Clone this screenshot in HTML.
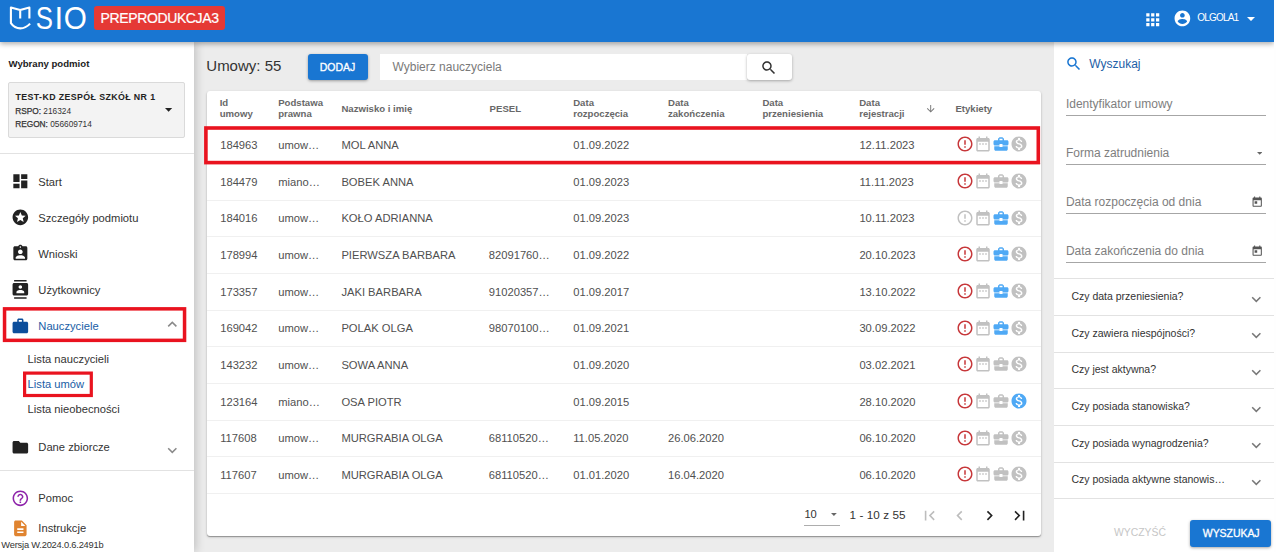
<!DOCTYPE html>
<html lang="pl">
<head>
<meta charset="utf-8">
<title>SIO - Lista umów</title>
<style>
*{box-sizing:border-box;margin:0;padding:0}
html,body{width:1276px;height:552px;overflow:hidden}
body{font-family:"Liberation Sans",sans-serif;background:#ececec;color:#333;position:relative;font-size:11.2px}
.abs{position:absolute}
.t{position:absolute;white-space:nowrap;line-height:1}
#hdr{position:absolute;left:0;top:0;width:1274px;height:42.4px;background:#1976d2;box-shadow:0 2px 5px rgba(0,0,0,.32);z-index:10}
#strip{position:absolute;left:1274px;top:0;width:2px;height:552px;background:#fefefe;z-index:11}
#badge{position:absolute;left:94.2px;top:6.2px;width:131px;height:23.8px;background:#e53935;border-radius:3px}
#side{position:absolute;left:0;top:42px;width:194px;height:510px;background:#fff;box-shadow:2px 0 9px rgba(0,0,0,.19);z-index:5}
#right{position:absolute;left:1053.8px;top:42px;width:220.4px;height:510px;background:#fff;z-index:4}
.mi{position:absolute;left:38.3px;font-size:11.2px;color:#333;white-space:nowrap;line-height:1}
.sub{position:absolute;left:27.6px;font-size:11.2px;color:#333;white-space:nowrap;line-height:1}
.hl{position:absolute;border:3.4px solid #e9131f;z-index:8}
#card{position:absolute;left:206.6px;top:91.3px;width:834.2px;height:444.8px;background:#fff;border-radius:3px;box-shadow:0 1px 1px rgba(0,0,0,.3),0 1px 3px rgba(0,0,0,.18);z-index:1}
.th{position:absolute;font-size:9.6px;font-weight:bold;color:#686868;line-height:11.4px;white-space:nowrap}
.sep{position:absolute;left:0;width:834.4px;height:1px;background:#f0f0f0}
.c{position:absolute;font-size:11.2px;line-height:1;color:#505050;white-space:nowrap}
.fl{position:absolute;left:12.1px;font-size:12px;color:#7e7e7e;white-space:nowrap;line-height:1}
.ul{position:absolute;left:12.1px;width:200.2px;height:1px;background:#a6a6a6}
.ex{position:absolute;left:0;width:220.4px;height:1px;background:#e2e2e2}
.et{position:absolute;left:17.6px;font-size:10.5px;color:#333;line-height:1;white-space:nowrap}
</style>
</head>
<body>
<div id="hdr">
<svg class="abs" style="left:0;top:0" width="96" height="42" viewBox="0 0 96 42"><path d="M29.4 18.6 L29.4 7.5 L20.2 10.1 L10.9 7.5 L10.9 23.2 C13 26.2 17 28.4 20.3 28.4 C23.6 28.4 27.3 26.6 30.1 23.6 M20.2 10.1 L20.2 18.6" fill="none" stroke="#fff" stroke-width="2.1" stroke-linejoin="round" stroke-linecap="butt"/><g font-family="Liberation Sans, sans-serif" font-size="31.9" fill="#fff"><text transform="translate(35.8 29.4) scale(.809 1)">S</text><text transform="translate(54.6 29.4) scale(.98 1)">I</text><text transform="translate(63.8 29.4) scale(.931 1)">O</text></g></svg>
<div id="badge"><span class="t" style="left:6.4px;top:4.95px;font-size:14px;color:#fff;letter-spacing:-0.38px;-webkit-text-stroke:0.2px #fff">PREPRODUKCJA3</span></div>
<svg class="abs" style="left:1142.55px;top:9.6px" width="19.5" height="19.5" viewBox="0 0 24 24"><path fill="#fff" d="M4 8h4V4H4v4zm6 12h4v-4h-4v4zm-6 0h4v-4H4v4zm0-6h4v-4H4v4zm6 0h4v-4h-4v4zm6-10v4h4V4h-4zm-6 4h4V4h-4v4zm6 6h4v-4h-4v4zm0 6h4v-4h-4v4z"/></svg>
<svg class="abs" style="left:1172.7px;top:9.2px" width="18.8" height="18.8" viewBox="0 0 24 24"><path fill="#fff" d="M12 2C6.480 2 2 6.480 2 12s4.480 10 10 10 10-4.480 10-10S17.520 2 12 2zm0 3c1.660 0 3 1.340 3 3s-1.340 3-3 3-3-1.340-3-3 1.340-3 3-3zm0 14.200c-2.500 0-4.710-1.280-6-3.220.030-1.990 4-3.080 6-3.080 1.990 0 5.970 1.090 6 3.080-1.290 1.940-3.500 3.220-6 3.220z"/></svg>
<span class="t" style="left:1197.2px;top:12.93px;font-size:10px;color:#fff;letter-spacing:-0.8px">OLGOLA1</span>
<svg class="abs" style="left:1247px;top:16.9px" width="8" height="4.1" viewBox="0 0 10 5"><path d="M0 0h10L5 5z" fill="#fff"/></svg>
</div><div id="strip"></div>
<div id="side">
<span class="t" style="left:8.5px;top:16.87px;font-size:9.6px;font-weight:bold;color:#222">Wybrany podmiot</span>
<div class="abs" style="left:8.2px;top:40px;width:176.4px;height:55.6px;background:#f3f3f3;border:1px solid #dadada;border-radius:2px">
<span class="t" style="left:6.300000000000001px;top:10.05px;font-size:8.8px;font-weight:bold;color:#222;letter-spacing:0.4px">TEST-KD ZESPÓŁ SZKÓŁ NR 1</span>
<span class="t" style="left:6.0px;top:23.77px;font-size:8.3px;color:#333"><span style="-webkit-text-stroke:0.25px #333">RSPO:</span> 216324</span>
<span class="t" style="left:6.0px;top:37.17px;font-size:8.3px;color:#333"><span style="-webkit-text-stroke:0.25px #333">REGON:</span> 056609714</span>
<svg class="abs" style="left:156.3px;top:25.200000000000003px" width="7.2" height="3.8" viewBox="0 0 10 5"><path d="M0 0h10L5 5z" fill="#222"/></svg>
</div>
<div class="abs" style="left:0;top:111px;width:194px;height:1px;background:#e2e2e2"></div>
<svg class="abs" style="left:10.7px;top:130.3px" width="18.7" height="18.7" viewBox="0 0 24 24"><path fill="#222" d="M3 13h8V3H3v10zm0 8h8v-6H3v6zm10 0h8V11h-8v10zm0-18v6h8V3h-8z"/></svg>
<span class="mi" style="top:134.82px;color:#333">Start</span>
<svg class="abs" style="left:10.7px;top:166.3px" width="18.7" height="18.7" viewBox="0 0 24 24"><path fill="#222" d="M11.99 2C6.47 2 2 6.48 2 12s4.47 10 9.99 10C17.52 22 22 17.52 22 12S17.52 2 11.99 2zm4.24 16L12 15.45 7.77 18l1.12-4.81-3.73-3.23 4.92-.42L12 5l1.92 4.53 4.920.420-3.730 3.230L16.230 18z"/></svg>
<span class="mi" style="top:170.82px;color:#333">Szczegóły podmiotu</span>
<svg class="abs" style="left:10.7px;top:202.3px" width="18.7" height="18.7" viewBox="0 0 24 24"><path fill="#222" d="M19 3h-4.180C14.4 1.84 13.3 1 12 1c-1.3 0-2.4.84-2.82 2H5c-1.1 0-2 .9-2 2v14c0 1.1.9 2 2 2h14c1.1 0 2-.9 2-2V5c0-1.1-.9-2-2-2zm-7 0c.55 0 1 .45 1 1s-.45 1-1 1-1-.45-1-1 .45-1 1-1zm0 4c1.660 0 3 1.340 3 3s-1.340 3-3 3-3-1.340-3-3 1.340-3 3-3zm6 12H6v-1.400c0-2 4-3.100 6-3.100s6 1.100 6 3.100V19z"/></svg>
<span class="mi" style="top:206.82px;color:#333">Wnioski</span>
<svg class="abs" style="left:10.7px;top:238.3px" width="18.7" height="18.7" viewBox="0 0 24 24"><path fill="#222" d="M20 0H4v2h16V0zM4 24h16v-2H4v2zM20 4H4c-1.100 0-2 .900-2 2v12c0 1.100.900 2 2 2h16c1.100 0 2-.900 2-2V6c0-1.100-.900-2-2-2zm-8 2.750c1.240 0 2.250 1.010 2.250 2.250s-1.010 2.250-2.250 2.250S9.750 10.240 9.750 9 10.760 6.750 12 6.750zM17 17H7v-1.500c0-1.670 3.330-2.500 5-2.500s5 .830 5 2.500V17z"/></svg>
<span class="mi" style="top:242.82px;color:#333">Użytkownicy</span>
<svg class="abs" style="left:10.7px;top:274.6px" width="18.7" height="18.7" viewBox="0 0 24 24"><path fill="#0c4e9b" d="M20 6h-4V4c0-1.110-.890-2-2-2h-4c-1.110 0-2 .890-2 2v2H4c-1.110 0-1.990.890-1.990 2L2 19c0 1.110.890 2 2 2h16c1.110 0 2-.890 2-2V8c0-1.110-.890-2-2-2zm-6 0h-4V4h4v2z"/></svg>
<span class="mi" style="top:279.12px;color:#185da6">Nauczyciele</span>
<svg class="abs" style="left:163.2px;top:273.0px" width="18.6" height="18.6" viewBox="0 0 24 24"><path fill="#8a8a8a" d="M12 8l-6 6 1.410 1.410L12 10.830l4.590 4.580L18 14z"/></svg>
<svg class="abs" style="left:1px;top:264px;z-index:8" width="187" height="39"><rect x="3.55" y="2.85" width="180.0" height="31.5" fill="none" stroke="#e9131f" stroke-width="3.5"/></svg>
<span class="sub" style="top:311.72px;color:#333">Lista nauczycieli</span>
<span class="sub" style="top:336.92px;color:#185da6">Lista umów</span>
<span class="sub" style="top:362.22px;color:#333">Lista nieobecności</span>
<svg class="abs" style="left:22px;top:328px;z-index:8" width="73" height="29"><rect x="2.6" y="3.1" width="66.7" height="22.4" fill="none" stroke="#e9131f" stroke-width="3.2"/></svg>
<svg class="abs" style="left:10.7px;top:396.15px" width="18.7" height="18.7" viewBox="0 0 24 24"><path fill="#222" d="M10 4H4c-1.100 0-1.990.900-1.990 2L2 18c0 1.100.900 2 2 2h16c1.100 0 2-.900 2-2V8c0-1.100-.900-2-2-2h-8l-2-2z"/></svg>
<span class="mi" style="top:399.92px">Dane zbiorcze</span>
<svg class="abs" style="left:162.8px;top:399.0px" width="18.6" height="18.6" viewBox="0 0 24 24"><path fill="#8a8a8a" d="M16.590 8.590L12 13.170 7.410 8.590 6 10l6 6 6-6z"/></svg>
<div class="abs" style="left:0;top:428.4px;width:194px;height:1px;background:#e2e2e2"></div>
<svg class="abs" style="left:10.9px;top:447.05px" width="18.7" height="18.7" viewBox="0 0 24 24"><path fill="#8e24aa" d="M11 18h2v-2h-2v2zm1-16C6.480 2 2 6.480 2 12s4.480 10 10 10 10-4.480 10-10S17.520 2 12 2zm0 18c-4.410 0-8-3.590-8-8s3.590-8 8-8 8 3.590 8 8-3.590 8-8 8zm0-14c-2.210 0-4 1.790-4 4h2c0-1.100.900-2 2-2s2 .900 2 2c0 2-3 1.750-3 5h2c0-2.250 3-2.500 3-5 0-2.210-1.790-4-4-4z"/></svg>
<span class="mi" style="top:450.92px">Pomoc</span>
<svg class="abs" style="left:10.7px;top:476.85px" width="18.7" height="18.7" viewBox="0 0 24 24"><path fill="#e08430" d="M14 2H6c-1.100 0-1.990.900-1.990 2L4 20c0 1.100.890 2 1.990 2H18c1.100 0 2-.900 2-2V8l-6-6zm2 16H8v-2h8v2zm0-4H8v-2h8v2zm-3-5V3.500L18.500 9H13z"/></svg>
<span class="mi" style="top:480.92px">Instrukcje</span>
<span class="t" style="left:1.3px;top:498.53px;font-size:9.3px;color:#333;letter-spacing:-0.2px">Wersja W.2024.0.6.2491b</span>
</div>
<span class="t" style="left:206.3px;top:57.5px;font-size:15px;color:#333;z-index:2">Umowy: 55</span>
<div class="abs" style="left:308.2px;top:53.7px;width:59.7px;height:26.8px;background:#1976d2;border-radius:3px;box-shadow:0 1px 3px rgba(0,0,0,.35)"><span class="t" style="left:11.6px;top:8.51px;font-size:10.5px;color:#fff;-webkit-text-stroke:0.3px #fff;letter-spacing:-0.05px">DODAJ</span></div>
<div class="abs" style="left:380.3px;top:53.8px;width:366.7px;height:26.5px;background:#fff;border-radius:0"><span class="t" style="left:12.2px;top:6.94px;font-size:12px;color:#7a7a7a">Wybierz nauczyciela</span></div>
<div class="abs" style="left:747px;top:53.8px;width:45px;height:26.5px;background:#fff;border-radius:3px;box-shadow:0 1px 3px rgba(0,0,0,.3)"><svg class="abs" style="left:13.4px;top:5.6px" width="17.6" height="17.6" viewBox="0 0 24 24"><path fill="#333" d="M15.500 14h-.790l-.280-.270C15.410 12.590 16 11.110 16 9.500 16 5.910 13.090 3 9.500 3S3 5.910 3 9.500 5.910 16 9.500 16c1.610 0 3.090-.590 4.230-1.570l.270.280v.790l5 4.990L20.490 19l-4.990-5zm-6 0C7.010 14 5 11.990 5 9.500S7.010 5 9.500 5 14 7.010 14 9.500 11.990 14 9.500 14z"/></svg></div>
<div id="card">
<span class="th" style="left:13.1px;top:5.57px">Id<br>umowy</span>
<span class="th" style="left:71.6px;top:5.57px">Podstawa<br>prawna</span>
<span class="th" style="left:134.8px;top:11.37px">Nazwisko i imię</span>
<span class="th" style="left:283.0px;top:11.37px">PESEL</span>
<span class="th" style="left:366.6px;top:5.57px">Data<br>rozpoczęcia</span>
<span class="th" style="left:461.4px;top:5.57px">Data<br>zakończenia</span>
<span class="th" style="left:555.8px;top:5.57px">Data<br>przeniesienia</span>
<span class="th" style="left:652.6px;top:5.57px">Data<br>rejestracji</span>
<span class="th" style="left:748.8px;top:11.37px">Etykiety</span>
<svg class="abs" style="left:718.9px;top:12.0px" width="11.4" height="11.4" viewBox="0 0 24 24"><path fill="#777" d="M20 12l-1.410-1.410L13 16.170V4h-2v12.170l-5.580-5.590L4 12l8 8 8-8z"/></svg>
<span class="c" style="left:13.6px;top:48.72px">184963</span>
<span class="c" style="left:71.6px;top:48.72px">umow…</span>
<span class="c" style="left:134.8px;top:48.72px">MOL ANNA</span>
<span class="c" style="left:366.6px;top:48.72px">01.09.2022</span>
<span class="c" style="left:652.8px;top:48.72px">12.11.2023</span>
<svg class="abs" style="left:749.0px;top:44.15px" width="18" height="18" viewBox="0 0 24 24"><path fill="#c7373a" d="M11 15h2v2h-2zm0-8h2v6h-2zm.990-5C6.470 2 2 6.480 2 12s4.470 10 9.990 10C17.520 22 22 17.520 22 12S17.520 2 11.990 2zM12 20c-4.420 0-8-3.580-8-8s3.580-8 8-8 8 3.580 8 8-3.580 8-8 8z"/></svg>
<svg class="abs" style="left:767.0px;top:44.15px" width="18" height="18" viewBox="0 0 24 24"><path fill="#c1c1c1" d="M9 11H7v2h2v-2zm4 0h-2v2h2v-2zm4 0h-2v2h2v-2zm2-7h-1V2h-2v2H8V2H6v2H5c-1.110 0-1.990.900-1.990 2L3 20c0 1.100.890 2 2 2h14c1.100 0 2-.900 2-2V6c0-1.100-.900-2-2-2zm0 16H5V9h14v11z"/></svg>
<svg class="abs" style="left:785.0px;top:44.15px" width="18" height="18" viewBox="0 0 24 24"><path fill="#4fa9f5" d="M10 16v-1H3.010L3 19c0 1.110.890 2 2 2h14c1.110 0 2-.890 2-2v-4h-7v1h-4zm10-9h-4.010V5l-2-2h-4l-2 2v2H4c-1.100 0-2 .900-2 2v3c0 1.110.890 2 2 2h6v-2h4v2h6c1.100 0 2-.900 2-2V9c0-1.100-.900-2-2-2zm-6 0h-4V5h4v2z"/></svg>
<svg class="abs" style="left:803.0px;top:44.15px" width="18" height="18" viewBox="0 0 24 24"><path fill="#c1c1c1" d="M12 2C6.480 2 2 6.480 2 12s4.480 10 10 10 10-4.480 10-10S17.520 2 12 2zm1.410 16.090V20h-2.670v-1.930c-1.710-.360-3.160-1.460-3.270-3.400h1.960c.100 1.050.820 1.870 2.650 1.870 1.960 0 2.400-.980 2.400-1.590 0-.830-.440-1.610-2.670-2.140-2.480-.600-4.180-1.620-4.180-3.670 0-1.720 1.390-2.840 3.110-3.210V4h2.670v1.950c1.860.450 2.790 1.860 2.850 3.390H14.300c-.050-1.110-.640-1.870-2.220-1.870-1.500 0-2.400.680-2.400 1.640 0 .840.650 1.390 2.670 1.910s4.180 1.390 4.180 3.910c-.010 1.830-1.380 2.830-3.120 3.160z"/></svg>
<div class="sep" style="top:71.85px"></div>
<span class="c" style="left:13.6px;top:85.37px">184479</span>
<span class="c" style="left:71.6px;top:85.37px">miano…</span>
<span class="c" style="left:134.8px;top:85.37px">BOBEK ANNA</span>
<span class="c" style="left:366.6px;top:85.37px">01.09.2023</span>
<span class="c" style="left:652.8px;top:85.37px">11.11.2023</span>
<svg class="abs" style="left:749.0px;top:80.8px" width="18" height="18" viewBox="0 0 24 24"><path fill="#c7373a" d="M11 15h2v2h-2zm0-8h2v6h-2zm.990-5C6.470 2 2 6.480 2 12s4.470 10 9.990 10C17.520 22 22 17.520 22 12S17.520 2 11.990 2zM12 20c-4.420 0-8-3.580-8-8s3.580-8 8-8 8 3.580 8 8-3.580 8-8 8z"/></svg>
<svg class="abs" style="left:767.0px;top:80.8px" width="18" height="18" viewBox="0 0 24 24"><path fill="#c1c1c1" d="M9 11H7v2h2v-2zm4 0h-2v2h2v-2zm4 0h-2v2h2v-2zm2-7h-1V2h-2v2H8V2H6v2H5c-1.110 0-1.990.900-1.990 2L3 20c0 1.100.890 2 2 2h14c1.100 0 2-.900 2-2V6c0-1.100-.900-2-2-2zm0 16H5V9h14v11z"/></svg>
<svg class="abs" style="left:785.0px;top:80.8px" width="18" height="18" viewBox="0 0 24 24"><path fill="#c1c1c1" d="M10 16v-1H3.010L3 19c0 1.110.890 2 2 2h14c1.110 0 2-.890 2-2v-4h-7v1h-4zm10-9h-4.010V5l-2-2h-4l-2 2v2H4c-1.100 0-2 .900-2 2v3c0 1.110.890 2 2 2h6v-2h4v2h6c1.100 0 2-.900 2-2V9c0-1.100-.900-2-2-2zm-6 0h-4V5h4v2z"/></svg>
<svg class="abs" style="left:803.0px;top:80.8px" width="18" height="18" viewBox="0 0 24 24"><path fill="#c1c1c1" d="M12 2C6.480 2 2 6.480 2 12s4.480 10 10 10 10-4.480 10-10S17.520 2 12 2zm1.410 16.090V20h-2.670v-1.930c-1.710-.360-3.160-1.460-3.270-3.400h1.960c.100 1.050.820 1.870 2.650 1.870 1.960 0 2.400-.980 2.400-1.590 0-.830-.440-1.610-2.670-2.140-2.480-.600-4.180-1.620-4.180-3.670 0-1.720 1.390-2.840 3.110-3.210V4h2.670v1.950c1.860.450 2.790 1.860 2.850 3.390H14.300c-.050-1.110-.640-1.870-2.220-1.870-1.500 0-2.400.680-2.400 1.640 0 .840.650 1.390 2.670 1.910s4.180 1.390 4.180 3.910c-.010 1.830-1.380 2.830-3.120 3.160z"/></svg>
<div class="sep" style="top:108.5px"></div>
<span class="c" style="left:13.6px;top:122.02px">184016</span>
<span class="c" style="left:71.6px;top:122.02px">umow…</span>
<span class="c" style="left:134.8px;top:122.02px">KOŁO ADRIANNA</span>
<span class="c" style="left:366.6px;top:122.02px">01.09.2023</span>
<span class="c" style="left:652.8px;top:122.02px">10.11.2023</span>
<svg class="abs" style="left:749.0px;top:117.45px" width="18" height="18" viewBox="0 0 24 24"><path fill="#c1c1c1" d="M11 15h2v2h-2zm0-8h2v6h-2zm.990-5C6.470 2 2 6.480 2 12s4.470 10 9.990 10C17.520 22 22 17.520 22 12S17.520 2 11.990 2zM12 20c-4.420 0-8-3.580-8-8s3.580-8 8-8 8 3.580 8 8-3.580 8-8 8z"/></svg>
<svg class="abs" style="left:767.0px;top:117.45px" width="18" height="18" viewBox="0 0 24 24"><path fill="#c1c1c1" d="M9 11H7v2h2v-2zm4 0h-2v2h2v-2zm4 0h-2v2h2v-2zm2-7h-1V2h-2v2H8V2H6v2H5c-1.110 0-1.990.900-1.990 2L3 20c0 1.100.890 2 2 2h14c1.100 0 2-.900 2-2V6c0-1.100-.900-2-2-2zm0 16H5V9h14v11z"/></svg>
<svg class="abs" style="left:785.0px;top:117.45px" width="18" height="18" viewBox="0 0 24 24"><path fill="#4fa9f5" d="M10 16v-1H3.010L3 19c0 1.110.890 2 2 2h14c1.110 0 2-.890 2-2v-4h-7v1h-4zm10-9h-4.010V5l-2-2h-4l-2 2v2H4c-1.100 0-2 .900-2 2v3c0 1.110.890 2 2 2h6v-2h4v2h6c1.100 0 2-.900 2-2V9c0-1.100-.900-2-2-2zm-6 0h-4V5h4v2z"/></svg>
<svg class="abs" style="left:803.0px;top:117.45px" width="18" height="18" viewBox="0 0 24 24"><path fill="#c1c1c1" d="M12 2C6.480 2 2 6.480 2 12s4.480 10 10 10 10-4.480 10-10S17.520 2 12 2zm1.410 16.090V20h-2.670v-1.930c-1.710-.360-3.160-1.460-3.270-3.400h1.960c.100 1.050.820 1.870 2.650 1.870 1.960 0 2.400-.980 2.400-1.590 0-.830-.440-1.610-2.670-2.140-2.480-.600-4.180-1.620-4.180-3.670 0-1.720 1.390-2.840 3.110-3.210V4h2.670v1.950c1.860.450 2.790 1.860 2.850 3.390H14.300c-.050-1.110-.640-1.870-2.220-1.870-1.500 0-2.400.680-2.400 1.640 0 .840.650 1.390 2.670 1.910s4.180 1.390 4.180 3.910c-.010 1.830-1.380 2.830-3.120 3.160z"/></svg>
<div class="sep" style="top:145.15px"></div>
<span class="c" style="left:13.6px;top:158.67px">178994</span>
<span class="c" style="left:71.6px;top:158.67px">umow…</span>
<span class="c" style="left:134.8px;top:158.67px">PIERWSZA BARBARA</span>
<span class="c" style="left:282.2px;top:158.67px">82091760…</span>
<span class="c" style="left:366.6px;top:158.67px">01.09.2022</span>
<span class="c" style="left:652.8px;top:158.67px">20.10.2023</span>
<svg class="abs" style="left:749.0px;top:154.1px" width="18" height="18" viewBox="0 0 24 24"><path fill="#c7373a" d="M11 15h2v2h-2zm0-8h2v6h-2zm.990-5C6.470 2 2 6.480 2 12s4.470 10 9.990 10C17.520 22 22 17.520 22 12S17.520 2 11.990 2zM12 20c-4.420 0-8-3.580-8-8s3.580-8 8-8 8 3.580 8 8-3.580 8-8 8z"/></svg>
<svg class="abs" style="left:767.0px;top:154.1px" width="18" height="18" viewBox="0 0 24 24"><path fill="#c1c1c1" d="M9 11H7v2h2v-2zm4 0h-2v2h2v-2zm4 0h-2v2h2v-2zm2-7h-1V2h-2v2H8V2H6v2H5c-1.110 0-1.990.900-1.990 2L3 20c0 1.100.890 2 2 2h14c1.100 0 2-.900 2-2V6c0-1.100-.900-2-2-2zm0 16H5V9h14v11z"/></svg>
<svg class="abs" style="left:785.0px;top:154.1px" width="18" height="18" viewBox="0 0 24 24"><path fill="#4fa9f5" d="M10 16v-1H3.010L3 19c0 1.110.890 2 2 2h14c1.110 0 2-.890 2-2v-4h-7v1h-4zm10-9h-4.010V5l-2-2h-4l-2 2v2H4c-1.100 0-2 .900-2 2v3c0 1.110.890 2 2 2h6v-2h4v2h6c1.100 0 2-.900 2-2V9c0-1.100-.900-2-2-2zm-6 0h-4V5h4v2z"/></svg>
<svg class="abs" style="left:803.0px;top:154.1px" width="18" height="18" viewBox="0 0 24 24"><path fill="#c1c1c1" d="M12 2C6.480 2 2 6.480 2 12s4.480 10 10 10 10-4.480 10-10S17.520 2 12 2zm1.410 16.090V20h-2.670v-1.930c-1.710-.360-3.160-1.460-3.270-3.400h1.960c.100 1.050.820 1.870 2.650 1.870 1.960 0 2.400-.980 2.400-1.590 0-.830-.440-1.610-2.670-2.140-2.480-.600-4.180-1.620-4.180-3.670 0-1.720 1.390-2.840 3.110-3.210V4h2.670v1.950c1.860.450 2.790 1.860 2.850 3.390H14.300c-.050-1.110-.640-1.870-2.220-1.870-1.500 0-2.400.680-2.400 1.640 0 .840.650 1.390 2.670 1.910s4.180 1.390 4.180 3.910c-.010 1.830-1.380 2.830-3.120 3.160z"/></svg>
<div class="sep" style="top:181.8px"></div>
<span class="c" style="left:13.6px;top:195.32px">173357</span>
<span class="c" style="left:71.6px;top:195.32px">umow…</span>
<span class="c" style="left:134.8px;top:195.32px">JAKI BARBARA</span>
<span class="c" style="left:282.2px;top:195.32px">91020357…</span>
<span class="c" style="left:366.6px;top:195.32px">01.09.2017</span>
<span class="c" style="left:652.8px;top:195.32px">13.10.2022</span>
<svg class="abs" style="left:749.0px;top:190.75px" width="18" height="18" viewBox="0 0 24 24"><path fill="#c7373a" d="M11 15h2v2h-2zm0-8h2v6h-2zm.990-5C6.470 2 2 6.480 2 12s4.470 10 9.990 10C17.520 22 22 17.520 22 12S17.520 2 11.990 2zM12 20c-4.420 0-8-3.580-8-8s3.580-8 8-8 8 3.580 8 8-3.580 8-8 8z"/></svg>
<svg class="abs" style="left:767.0px;top:190.75px" width="18" height="18" viewBox="0 0 24 24"><path fill="#c1c1c1" d="M9 11H7v2h2v-2zm4 0h-2v2h2v-2zm4 0h-2v2h2v-2zm2-7h-1V2h-2v2H8V2H6v2H5c-1.110 0-1.990.900-1.990 2L3 20c0 1.100.890 2 2 2h14c1.100 0 2-.900 2-2V6c0-1.100-.900-2-2-2zm0 16H5V9h14v11z"/></svg>
<svg class="abs" style="left:785.0px;top:190.75px" width="18" height="18" viewBox="0 0 24 24"><path fill="#4fa9f5" d="M10 16v-1H3.010L3 19c0 1.110.890 2 2 2h14c1.110 0 2-.890 2-2v-4h-7v1h-4zm10-9h-4.010V5l-2-2h-4l-2 2v2H4c-1.100 0-2 .900-2 2v3c0 1.110.890 2 2 2h6v-2h4v2h6c1.100 0 2-.900 2-2V9c0-1.100-.900-2-2-2zm-6 0h-4V5h4v2z"/></svg>
<svg class="abs" style="left:803.0px;top:190.75px" width="18" height="18" viewBox="0 0 24 24"><path fill="#c1c1c1" d="M12 2C6.480 2 2 6.480 2 12s4.480 10 10 10 10-4.480 10-10S17.520 2 12 2zm1.410 16.090V20h-2.670v-1.930c-1.710-.360-3.160-1.460-3.270-3.400h1.960c.100 1.050.820 1.870 2.650 1.870 1.960 0 2.400-.980 2.400-1.590 0-.830-.440-1.610-2.670-2.140-2.480-.600-4.180-1.620-4.180-3.670 0-1.720 1.390-2.840 3.110-3.210V4h2.670v1.950c1.860.450 2.790 1.860 2.850 3.390H14.300c-.050-1.110-.640-1.870-2.220-1.870-1.500 0-2.400.680-2.400 1.640 0 .840.650 1.390 2.670 1.910s4.180 1.390 4.180 3.910c-.010 1.830-1.380 2.830-3.120 3.160z"/></svg>
<div class="sep" style="top:218.45px"></div>
<span class="c" style="left:13.6px;top:231.97px">169042</span>
<span class="c" style="left:71.6px;top:231.97px">umow…</span>
<span class="c" style="left:134.8px;top:231.97px">POLAK OLGA</span>
<span class="c" style="left:282.2px;top:231.97px">98070100…</span>
<span class="c" style="left:366.6px;top:231.97px">01.09.2021</span>
<span class="c" style="left:652.8px;top:231.97px">30.09.2022</span>
<svg class="abs" style="left:749.0px;top:227.4px" width="18" height="18" viewBox="0 0 24 24"><path fill="#c7373a" d="M11 15h2v2h-2zm0-8h2v6h-2zm.990-5C6.470 2 2 6.480 2 12s4.470 10 9.990 10C17.520 22 22 17.520 22 12S17.520 2 11.990 2zM12 20c-4.420 0-8-3.580-8-8s3.580-8 8-8 8 3.580 8 8-3.580 8-8 8z"/></svg>
<svg class="abs" style="left:767.0px;top:227.4px" width="18" height="18" viewBox="0 0 24 24"><path fill="#c1c1c1" d="M9 11H7v2h2v-2zm4 0h-2v2h2v-2zm4 0h-2v2h2v-2zm2-7h-1V2h-2v2H8V2H6v2H5c-1.110 0-1.990.900-1.990 2L3 20c0 1.100.890 2 2 2h14c1.100 0 2-.900 2-2V6c0-1.100-.900-2-2-2zm0 16H5V9h14v11z"/></svg>
<svg class="abs" style="left:785.0px;top:227.4px" width="18" height="18" viewBox="0 0 24 24"><path fill="#4fa9f5" d="M10 16v-1H3.010L3 19c0 1.110.890 2 2 2h14c1.110 0 2-.890 2-2v-4h-7v1h-4zm10-9h-4.010V5l-2-2h-4l-2 2v2H4c-1.100 0-2 .900-2 2v3c0 1.110.890 2 2 2h6v-2h4v2h6c1.100 0 2-.900 2-2V9c0-1.100-.900-2-2-2zm-6 0h-4V5h4v2z"/></svg>
<svg class="abs" style="left:803.0px;top:227.4px" width="18" height="18" viewBox="0 0 24 24"><path fill="#c1c1c1" d="M12 2C6.480 2 2 6.480 2 12s4.480 10 10 10 10-4.480 10-10S17.520 2 12 2zm1.410 16.090V20h-2.670v-1.930c-1.710-.360-3.160-1.460-3.270-3.400h1.960c.100 1.050.820 1.870 2.650 1.870 1.960 0 2.400-.980 2.400-1.590 0-.830-.440-1.610-2.670-2.140-2.480-.600-4.180-1.620-4.180-3.670 0-1.720 1.390-2.840 3.110-3.210V4h2.670v1.950c1.860.450 2.790 1.860 2.850 3.390H14.300c-.050-1.110-.640-1.870-2.220-1.870-1.500 0-2.400.680-2.400 1.640 0 .840.650 1.390 2.670 1.910s4.180 1.390 4.180 3.910c-.010 1.830-1.380 2.830-3.120 3.160z"/></svg>
<div class="sep" style="top:255.1px"></div>
<span class="c" style="left:13.6px;top:268.62px">143232</span>
<span class="c" style="left:71.6px;top:268.62px">umow…</span>
<span class="c" style="left:134.8px;top:268.62px">SOWA ANNA</span>
<span class="c" style="left:366.6px;top:268.62px">01.09.2020</span>
<span class="c" style="left:652.8px;top:268.62px">03.02.2021</span>
<svg class="abs" style="left:749.0px;top:264.05px" width="18" height="18" viewBox="0 0 24 24"><path fill="#c7373a" d="M11 15h2v2h-2zm0-8h2v6h-2zm.990-5C6.470 2 2 6.480 2 12s4.470 10 9.990 10C17.520 22 22 17.520 22 12S17.520 2 11.990 2zM12 20c-4.420 0-8-3.580-8-8s3.580-8 8-8 8 3.580 8 8-3.580 8-8 8z"/></svg>
<svg class="abs" style="left:767.0px;top:264.05px" width="18" height="18" viewBox="0 0 24 24"><path fill="#c1c1c1" d="M9 11H7v2h2v-2zm4 0h-2v2h2v-2zm4 0h-2v2h2v-2zm2-7h-1V2h-2v2H8V2H6v2H5c-1.110 0-1.990.900-1.990 2L3 20c0 1.100.890 2 2 2h14c1.100 0 2-.900 2-2V6c0-1.100-.900-2-2-2zm0 16H5V9h14v11z"/></svg>
<svg class="abs" style="left:785.0px;top:264.05px" width="18" height="18" viewBox="0 0 24 24"><path fill="#c1c1c1" d="M10 16v-1H3.010L3 19c0 1.110.890 2 2 2h14c1.110 0 2-.890 2-2v-4h-7v1h-4zm10-9h-4.010V5l-2-2h-4l-2 2v2H4c-1.100 0-2 .900-2 2v3c0 1.110.890 2 2 2h6v-2h4v2h6c1.100 0 2-.900 2-2V9c0-1.100-.900-2-2-2zm-6 0h-4V5h4v2z"/></svg>
<svg class="abs" style="left:803.0px;top:264.05px" width="18" height="18" viewBox="0 0 24 24"><path fill="#c1c1c1" d="M12 2C6.480 2 2 6.480 2 12s4.480 10 10 10 10-4.480 10-10S17.520 2 12 2zm1.410 16.090V20h-2.670v-1.930c-1.710-.360-3.160-1.460-3.270-3.400h1.960c.100 1.050.820 1.870 2.650 1.870 1.960 0 2.400-.980 2.400-1.590 0-.830-.440-1.610-2.670-2.140-2.480-.600-4.180-1.620-4.180-3.670 0-1.720 1.390-2.840 3.110-3.210V4h2.670v1.950c1.860.450 2.790 1.860 2.850 3.390H14.300c-.050-1.110-.640-1.870-2.220-1.870-1.500 0-2.400.680-2.400 1.640 0 .840.650 1.390 2.670 1.910s4.180 1.390 4.180 3.910c-.010 1.830-1.380 2.830-3.120 3.160z"/></svg>
<div class="sep" style="top:291.75px"></div>
<span class="c" style="left:13.6px;top:305.27px">123164</span>
<span class="c" style="left:71.6px;top:305.27px">miano…</span>
<span class="c" style="left:134.8px;top:305.27px">OSA PIOTR</span>
<span class="c" style="left:366.6px;top:305.27px">01.09.2015</span>
<span class="c" style="left:652.8px;top:305.27px">28.10.2020</span>
<svg class="abs" style="left:749.0px;top:300.7px" width="18" height="18" viewBox="0 0 24 24"><path fill="#c7373a" d="M11 15h2v2h-2zm0-8h2v6h-2zm.990-5C6.470 2 2 6.480 2 12s4.470 10 9.990 10C17.520 22 22 17.520 22 12S17.520 2 11.990 2zM12 20c-4.420 0-8-3.580-8-8s3.580-8 8-8 8 3.580 8 8-3.580 8-8 8z"/></svg>
<svg class="abs" style="left:767.0px;top:300.7px" width="18" height="18" viewBox="0 0 24 24"><path fill="#c1c1c1" d="M9 11H7v2h2v-2zm4 0h-2v2h2v-2zm4 0h-2v2h2v-2zm2-7h-1V2h-2v2H8V2H6v2H5c-1.110 0-1.990.900-1.990 2L3 20c0 1.100.890 2 2 2h14c1.100 0 2-.900 2-2V6c0-1.100-.900-2-2-2zm0 16H5V9h14v11z"/></svg>
<svg class="abs" style="left:785.0px;top:300.7px" width="18" height="18" viewBox="0 0 24 24"><path fill="#c1c1c1" d="M10 16v-1H3.010L3 19c0 1.110.890 2 2 2h14c1.110 0 2-.890 2-2v-4h-7v1h-4zm10-9h-4.010V5l-2-2h-4l-2 2v2H4c-1.100 0-2 .900-2 2v3c0 1.110.890 2 2 2h6v-2h4v2h6c1.100 0 2-.900 2-2V9c0-1.100-.900-2-2-2zm-6 0h-4V5h4v2z"/></svg>
<svg class="abs" style="left:803.0px;top:300.7px" width="18" height="18" viewBox="0 0 24 24"><path fill="#4fa9f5" d="M12 2C6.480 2 2 6.480 2 12s4.480 10 10 10 10-4.480 10-10S17.520 2 12 2zm1.410 16.090V20h-2.670v-1.930c-1.710-.360-3.160-1.460-3.270-3.400h1.960c.100 1.050.820 1.870 2.650 1.870 1.960 0 2.400-.980 2.400-1.590 0-.830-.440-1.610-2.670-2.140-2.480-.600-4.180-1.620-4.180-3.670 0-1.720 1.390-2.840 3.110-3.210V4h2.670v1.950c1.860.450 2.790 1.860 2.850 3.390H14.300c-.050-1.110-.640-1.870-2.220-1.870-1.500 0-2.400.680-2.400 1.640 0 .840.650 1.390 2.670 1.910s4.180 1.390 4.180 3.910c-.010 1.830-1.380 2.830-3.120 3.160z"/></svg>
<div class="sep" style="top:328.4px"></div>
<span class="c" style="left:13.6px;top:341.92px">117608</span>
<span class="c" style="left:71.6px;top:341.92px">umow…</span>
<span class="c" style="left:134.8px;top:341.92px">MURGRABIA OLGA</span>
<span class="c" style="left:282.2px;top:341.92px">68110520…</span>
<span class="c" style="left:366.6px;top:341.92px">11.05.2020</span>
<span class="c" style="left:461.4px;top:341.92px">26.06.2020</span>
<span class="c" style="left:652.8px;top:341.92px">06.10.2020</span>
<svg class="abs" style="left:749.0px;top:337.35px" width="18" height="18" viewBox="0 0 24 24"><path fill="#c7373a" d="M11 15h2v2h-2zm0-8h2v6h-2zm.990-5C6.470 2 2 6.480 2 12s4.470 10 9.990 10C17.520 22 22 17.520 22 12S17.520 2 11.990 2zM12 20c-4.420 0-8-3.580-8-8s3.580-8 8-8 8 3.580 8 8-3.580 8-8 8z"/></svg>
<svg class="abs" style="left:767.0px;top:337.35px" width="18" height="18" viewBox="0 0 24 24"><path fill="#c1c1c1" d="M9 11H7v2h2v-2zm4 0h-2v2h2v-2zm4 0h-2v2h2v-2zm2-7h-1V2h-2v2H8V2H6v2H5c-1.110 0-1.990.900-1.990 2L3 20c0 1.100.890 2 2 2h14c1.100 0 2-.900 2-2V6c0-1.100-.900-2-2-2zm0 16H5V9h14v11z"/></svg>
<svg class="abs" style="left:785.0px;top:337.35px" width="18" height="18" viewBox="0 0 24 24"><path fill="#c1c1c1" d="M10 16v-1H3.010L3 19c0 1.110.890 2 2 2h14c1.110 0 2-.890 2-2v-4h-7v1h-4zm10-9h-4.010V5l-2-2h-4l-2 2v2H4c-1.100 0-2 .900-2 2v3c0 1.110.890 2 2 2h6v-2h4v2h6c1.100 0 2-.900 2-2V9c0-1.100-.900-2-2-2zm-6 0h-4V5h4v2z"/></svg>
<svg class="abs" style="left:803.0px;top:337.35px" width="18" height="18" viewBox="0 0 24 24"><path fill="#c1c1c1" d="M12 2C6.480 2 2 6.480 2 12s4.480 10 10 10 10-4.480 10-10S17.520 2 12 2zm1.410 16.090V20h-2.670v-1.930c-1.710-.360-3.160-1.460-3.270-3.400h1.960c.100 1.050.820 1.870 2.650 1.870 1.960 0 2.400-.980 2.400-1.590 0-.830-.440-1.610-2.670-2.140-2.480-.600-4.180-1.620-4.180-3.670 0-1.720 1.390-2.840 3.110-3.210V4h2.670v1.950c1.860.450 2.790 1.860 2.850 3.390H14.300c-.050-1.110-.640-1.870-2.220-1.870-1.500 0-2.400.680-2.400 1.640 0 .840.650 1.390 2.670 1.910s4.180 1.390 4.180 3.910c-.010 1.830-1.380 2.830-3.120 3.160z"/></svg>
<div class="sep" style="top:365.05px"></div>
<span class="c" style="left:13.6px;top:378.57px">117607</span>
<span class="c" style="left:71.6px;top:378.57px">umow…</span>
<span class="c" style="left:134.8px;top:378.57px">MURGRABIA OLGA</span>
<span class="c" style="left:282.2px;top:378.57px">68110520…</span>
<span class="c" style="left:366.6px;top:378.57px">01.01.2020</span>
<span class="c" style="left:461.4px;top:378.57px">16.04.2020</span>
<span class="c" style="left:652.8px;top:378.57px">06.10.2020</span>
<svg class="abs" style="left:749.0px;top:374.0px" width="18" height="18" viewBox="0 0 24 24"><path fill="#c7373a" d="M11 15h2v2h-2zm0-8h2v6h-2zm.990-5C6.470 2 2 6.480 2 12s4.470 10 9.990 10C17.520 22 22 17.520 22 12S17.520 2 11.990 2zM12 20c-4.420 0-8-3.580-8-8s3.580-8 8-8 8 3.580 8 8-3.580 8-8 8z"/></svg>
<svg class="abs" style="left:767.0px;top:374.0px" width="18" height="18" viewBox="0 0 24 24"><path fill="#c1c1c1" d="M9 11H7v2h2v-2zm4 0h-2v2h2v-2zm4 0h-2v2h2v-2zm2-7h-1V2h-2v2H8V2H6v2H5c-1.110 0-1.990.900-1.990 2L3 20c0 1.100.890 2 2 2h14c1.100 0 2-.900 2-2V6c0-1.100-.900-2-2-2zm0 16H5V9h14v11z"/></svg>
<svg class="abs" style="left:785.0px;top:374.0px" width="18" height="18" viewBox="0 0 24 24"><path fill="#c1c1c1" d="M10 16v-1H3.010L3 19c0 1.110.890 2 2 2h14c1.110 0 2-.890 2-2v-4h-7v1h-4zm10-9h-4.010V5l-2-2h-4l-2 2v2H4c-1.100 0-2 .900-2 2v3c0 1.110.890 2 2 2h6v-2h4v2h6c1.100 0 2-.900 2-2V9c0-1.100-.900-2-2-2zm-6 0h-4V5h4v2z"/></svg>
<svg class="abs" style="left:803.0px;top:374.0px" width="18" height="18" viewBox="0 0 24 24"><path fill="#c1c1c1" d="M12 2C6.480 2 2 6.480 2 12s4.480 10 10 10 10-4.480 10-10S17.520 2 12 2zm1.410 16.090V20h-2.670v-1.930c-1.710-.360-3.160-1.460-3.270-3.400h1.960c.100 1.050.820 1.870 2.650 1.870 1.960 0 2.400-.980 2.400-1.590 0-.830-.440-1.610-2.670-2.140-2.480-.600-4.180-1.620-4.180-3.670 0-1.720 1.390-2.840 3.110-3.210V4h2.670v1.950c1.860.450 2.790 1.860 2.850 3.390H14.300c-.050-1.110-.640-1.870-2.220-1.870-1.500 0-2.400.680-2.400 1.640 0 .840.650 1.390 2.670 1.910s4.180 1.390 4.180 3.910c-.010 1.830-1.380 2.830-3.120 3.160z"/></svg>
<div class="sep" style="top:401.7px"></div>
<span class="c" style="left:597.8px;top:417.82px;color:#333">10</span>
<div class="abs" style="left:597.1px;top:433.7px;width:36px;height:1px;background:#adadad"></div>
<svg class="abs" style="left:624.3px;top:421.9px" width="5.8" height="2.9" viewBox="0 0 10 5"><path d="M0 0h10L5 5z" fill="#666"/></svg>
<span class="c" style="left:642.8px;top:417.4px;font-size:11.7px;word-spacing:0.25px;color:#333">1 - 10 z 55</span>
<svg class="abs" style="left:713.4px;top:415.0px" width="19.2" height="19.2" viewBox="0 0 24 24"><path fill="#bdbdbd" d="M18.410 16.590L13.820 12l4.590-4.590L17 6l-6 6 6 6zM6 6h2v12H6z"/></svg>
<svg class="abs" style="left:743.6px;top:415.0px" width="19.2" height="19.2" viewBox="0 0 24 24"><path fill="#bdbdbd" d="M15.410 7.410L14 6l-6 6 6 6 1.410-1.410L10.830 12z"/></svg>
<svg class="abs" style="left:773.4px;top:415.0px" width="19.2" height="19.2" viewBox="0 0 24 24"><path fill="#222" d="M10 6L8.590 7.410 13.170 12l-4.580 4.590L10 18l6-6z"/></svg>
<svg class="abs" style="left:803.7px;top:415.0px" width="19.2" height="19.2" viewBox="0 0 24 24"><path fill="#222" d="M5.590 7.410L10.180 12l-4.590 4.590L7 18l6-6-6-6zM16 6h2v12h-2z"/></svg>
</div>
<svg class="abs" style="left:203px;top:125px;z-index:8" width="839" height="42"><rect x="2.9" y="3.0" width="832.4" height="34.6" fill="none" stroke="#e9131f" stroke-width="3.6"/></svg>
<div id="right">
<svg class="abs" style="left:11.1px;top:12.9px" width="17.6" height="17.6" viewBox="0 0 24 24"><path fill="#1976d2" d="M15.500 14h-.790l-.280-.270C15.410 12.590 16 11.110 16 9.500 16 5.910 13.090 3 9.500 3S3 5.910 3 9.500 5.910 16 9.500 16c1.610 0 3.090-.590 4.230-1.570l.270.280v.790l5 4.990L20.490 19l-4.990-5zm-6 0C7.010 14 5 11.990 5 9.500S7.010 5 9.500 5 14 7.010 14 9.500 11.990 14 9.500 14z"/></svg>
<span class="t" style="left:35.5px;top:15.84px;font-size:12px;color:#1d5ea6">Wyszukaj</span>
<span class="fl" style="top:55.54px">Identyfikator umowy</span>
<div class="ul" style="top:73.2px"></div>
<span class="fl" style="top:104.64px">Forma zatrudnienia</span>
<div class="ul" style="top:122.2px"></div>
<svg class="abs" style="left:203.0px;top:109.7px" width="5.4" height="2.9" viewBox="0 0 10 5"><path d="M0 0h10L5 5z" fill="#666"/></svg>
<span class="fl" style="top:153.64px">Data rozpoczęcia od dnia</span>
<div class="ul" style="top:171.4px"></div>
<svg class="abs" style="left:196.8px;top:154.2px" width="12.4" height="12.4" viewBox="0 0 24 24"><path fill="#555" d="M19 3h-1V1h-2v2H8V1H6v2H5c-1.110 0-1.990.900-1.990 2L3 19c0 1.100.890 2 2 2h14c1.100 0 2-.900 2-2V5c0-1.100-.900-2-2-2zm0 16H5V8h14v11zM7 10h5v5H7z"/></svg>
<span class="fl" style="top:202.84px">Data zakończenia do dnia</span>
<div class="ul" style="top:220.4px"></div>
<svg class="abs" style="left:196.8px;top:203.4px" width="12.4" height="12.4" viewBox="0 0 24 24"><path fill="#555" d="M19 3h-1V1h-2v2H8V1H6v2H5c-1.110 0-1.990.900-1.990 2L3 19c0 1.100.890 2 2 2h14c1.100 0 2-.900 2-2V5c0-1.100-.900-2-2-2zm0 16H5V8h14v11zM7 10h5v5H7z"/></svg>
<div class="ex" style="top:236.3px"></div>
<span class="et" style="top:249.01px">Czy data przeniesienia?</span>
<svg class="abs" style="left:193.6px;top:247.6px" width="18.6" height="18.6" viewBox="0 0 24 24"><path fill="#787878" d="M16.590 8.590L12 13.170 7.410 8.590 6 10l6 6 6-6z"/></svg>
<div class="ex" style="top:272.96px"></div>
<span class="et" style="top:285.67px">Czy zawiera niespójności?</span>
<svg class="abs" style="left:193.6px;top:284.26px" width="18.6" height="18.6" viewBox="0 0 24 24"><path fill="#787878" d="M16.590 8.590L12 13.170 7.410 8.590 6 10l6 6 6-6z"/></svg>
<div class="ex" style="top:309.62px"></div>
<span class="et" style="top:322.33px">Czy jest aktywna?</span>
<svg class="abs" style="left:193.6px;top:320.92px" width="18.6" height="18.6" viewBox="0 0 24 24"><path fill="#787878" d="M16.590 8.590L12 13.170 7.410 8.590 6 10l6 6 6-6z"/></svg>
<div class="ex" style="top:346.28px"></div>
<span class="et" style="top:358.99px">Czy posiada stanowiska?</span>
<svg class="abs" style="left:193.6px;top:357.58px" width="18.6" height="18.6" viewBox="0 0 24 24"><path fill="#787878" d="M16.590 8.590L12 13.170 7.410 8.590 6 10l6 6 6-6z"/></svg>
<div class="ex" style="top:382.94px"></div>
<span class="et" style="top:395.65px">Czy posiada wynagrodzenia?</span>
<svg class="abs" style="left:193.6px;top:394.24px" width="18.6" height="18.6" viewBox="0 0 24 24"><path fill="#787878" d="M16.590 8.590L12 13.170 7.410 8.590 6 10l6 6 6-6z"/></svg>
<div class="ex" style="top:419.6px"></div>
<span class="et" style="top:432.31px">Czy posiada aktywne stanowis…</span>
<svg class="abs" style="left:193.6px;top:430.9px" width="18.6" height="18.6" viewBox="0 0 24 24"><path fill="#787878" d="M16.590 8.590L12 13.170 7.410 8.590 6 10l6 6 6-6z"/></svg>
<div class="ex" style="top:456.26px"></div>
<span class="t" style="left:60.2px;top:485.8px;font-size:10.4px;color:#c6c6c6">WYCZYŚĆ</span>
<div class="abs" style="left:136.6px;top:477.5px;width:81px;height:27px;background:#1976d2;border-radius:3px;box-shadow:0 1px 3px rgba(0,0,0,.35)"><span class="t" style="left:12.4px;top:8.4px;font-size:10.5px;color:#fff;-webkit-text-stroke:0.3px #fff;letter-spacing:-0.05px">WYSZUKAJ</span></div>
</div>
</body>
</html>
